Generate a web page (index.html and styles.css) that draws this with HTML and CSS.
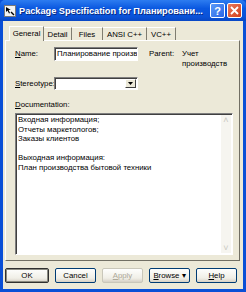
FILE: index.html
```html
<!DOCTYPE html>
<html lang="ru">
<head>
    <meta charset="UTF-8">
    <title>Package Specification</title>
    <link rel="stylesheet" href="styles.css">
</head>
<body>
    <div class="window">
        <div class="titlebar">
            <svg class="app-icon" width="12" height="12" viewBox="0 0 12 12">
                <rect x="0.5" y="0.5" width="11" height="11" fill="#f4f4f4" stroke="#7a7a7a"/>
                <path d="M2 2 L2 7 L3.5 5.5 L5 8.5 L6 8 L4.6 5 L6.8 5 Z" fill="#000"/>
                <path d="M7 7 L10 10" stroke="#000" stroke-width="1.4"/>
            </svg>
            <span class="title">Package Specification for Планировани...</span>
            <span class="tbtn help">?</span>
            <span class="tbtn close">
                <svg width="9" height="9" viewBox="0 0 9 9"><path d="M1 1 L8 8 M8 1 L1 8" stroke="#fff" stroke-width="1.8"/></svg>
            </span>
        </div>
        <div class="client">
            <div class="tabs">
                <div class="tab active tab-general">General</div>
                <div class="tab tab-detail">Detail</div>
                <div class="tab tab-files">Files</div>
                <div class="tab tab-ansi">ANSI C++</div>
                <div class="tab tab-vc">VC++</div>
            </div>
            <div class="panel">
                <div class="row">
                    <span class="label"><u>N</u>ame:</span>
                    <div class="field">Планирование произв</div>
                    <span class="parent-label">Parent:</span>
                    <span class="parent-value">Учет<br>производств</span>
                </div>
                <div class="row row-combo">
                    <span class="label"><u>S</u>tereotype:</span>
                    <div class="field combo">
                        <span class="combo-btn">
                            <svg width="5" height="3" viewBox="0 0 5 3"><path d="M0 0 H5 L2.5 3 Z" fill="#000"/></svg>
                        </span>
                    </div>
                </div>
                <div class="doc-label"><u>D</u>ocumentation:</div>
                <div class="doc">
                    <div class="doc-text">
                        Входная информация;<br>
                        Отчеты маркетологов;<br>
                        Заказы клиентов<br>
                        <br>
                        Выходная информация:<br>
                        План производства бытовой техники
                    </div>
                    <div class="scroll">
                        <span class="arrow">&#x2C4;</span>
                        <span class="arrow">&#x2C5;</span>
                    </div>
                </div>
            </div>
            <div class="buttons">
                <div class="btn default">OK</div>
                <div class="btn">Cancel</div>
                <div class="btn disabled"><u>A</u>pply</div>
                <div class="btn"><u>B</u>rowse &#9662;</div>
                <div class="btn"><u>H</u>elp</div>
            </div>
        </div>
    </div>
</body>
</html>
```
FILE: styles.css
```css
body {
    margin: 0;
    font-family: "Liberation Sans", Arial, sans-serif;
    font-size: 7.8px;
    color: #000;
}

.window {
    width: 246px;
    height: 292px;
    box-sizing: border-box;
    background: #0a4fd6;
    padding: 0 3px 3px 3px;
    display: flex;
    flex-direction: column;
}

.titlebar {
    height: 21px;
    margin: 0 -3px;
    padding: 0 4px;
    display: flex;
    align-items: center;
    background: linear-gradient(#2d7cf0, #0a58e0 40%, #0a52d8 80%, #0847c4);
    border-radius: 5px 5px 0 0;
}

.app-icon {
    flex: none;
    margin-right: 3px;
}

.title {
    flex: 1;
    color: #fff;
    font-weight: bold;
    font-size: 9.2px;
    white-space: nowrap;
    text-shadow: 1px 1px 0 #0a2a80;
}

.tbtn {
    width: 15px;
    height: 15px;
    flex: none;
    box-sizing: border-box;
    border: 1px solid #fff;
    border-radius: 2px;
    display: flex;
    align-items: center;
    justify-content: center;
    margin-left: 2px;
    color: #fff;
    font-weight: bold;
    font-size: 11px;
}

.help {
    background: linear-gradient(135deg, #5b9af8, #2a66e6);
}

.close {
    background: linear-gradient(135deg, #e8795c, #d3401c);
}

.client {
    flex: 1;
    background: #ece9d8;
    padding: 4px 3px 0 2px;
    display: flex;
    flex-direction: column;
}

.tabs {
    display: flex;
    height: 15px;
    padding-left: 4px;
    align-items: flex-end;
}

.tab {
    height: 13px;
    line-height: 13px;
    box-sizing: border-box;
    text-align: center;
    border-right: 1px solid #7f7d70;
    border-top: 1px solid #fff;
    background: #ece9d8;
}

.tab.active {
    height: 15px;
    line-height: 14px;
    border-left: 1px solid #fff;
    position: relative;
    top: 1px;
}

.tab-general { width: 35px; }
.tab-detail { width: 28px; }
.tab-files { width: 31px; }
.tab-ansi { width: 44px; }
.tab-vc { width: 29px; }

.panel {
    height: 221px;
    box-sizing: border-box;
    border: 1px solid #fff;
    border-right-color: #716f64;
    border-bottom-color: #716f64;
    padding: 6px 6px 5px 9px;
    display: flex;
    flex-direction: column;
}

.row {
    display: flex;
    align-items: flex-start;
}

.row > * {
    flex: none;
}

.label {
    width: 39px;
    line-height: 14px;
    white-space: nowrap;
}

.field {
    width: 84px;
    height: 14px;
    box-sizing: border-box;
    background: #fff;
    border: 1px solid;
    border-color: #7f7f7f #fff #fff #7f7f7f;
    box-shadow: inset 1px 1px 0 #404040;
    line-height: 12px;
    padding-left: 2px;
    white-space: nowrap;
    overflow: hidden;
}

.parent-label {
    margin-left: 11px;
    width: 33px;
    line-height: 14px;
}

.parent-value {
    line-height: 10px;
    padding-top: 2px;
}

.row-combo {
    margin-top: 8px;
}

.combo {
    height: 13px;
    display: flex;
    justify-content: flex-end;
    padding: 1px;
}

.combo-btn {
    width: 11px;
    background: #ece9d8;
    border: 1px solid;
    border-color: #fff #404040 #404040 #fff;
    box-sizing: border-box;
    display: flex;
    align-items: center;
    justify-content: center;
}

.doc-label {
    margin-top: 9px;
    line-height: 10px;
}

.doc {
    margin-top: 3px;
    flex: 1;
    background: #fff;
    border: 1px solid;
    border-color: #7f7f7f #fff #fff #7f7f7f;
    box-shadow: inset 1px 1px 0 #404040;
    display: flex;
}

.doc-text {
    flex: 1;
    padding: 1px 0 0 2px;
    line-height: 9.6px;
}

.scroll {
    width: 10px;
    margin: 1px 1px 1px 0;
    background: #f6f5f0;
    display: flex;
    flex-direction: column;
    justify-content: space-between;
    align-items: center;
    color: #c8c8c0;
    font-size: 9px;
}

.arrow {
    line-height: 10px;
}

.buttons {
    display: flex;
    gap: 6px;
    margin-top: 7px;
}

.btn {
    width: 41px;
    height: 15px;
    box-sizing: border-box;
    border: 1px solid #003c74;
    border-radius: 2px;
    background: linear-gradient(#fefefd, #f0efe7 70%, #d6d0c5);
    text-align: center;
    line-height: 13px;
}

.btn.default {
    width: 44px;
    border: 1px solid #303030;
    box-shadow: inset 0 0 0 1px #8a8a80;
}

.btn.disabled {
    color: #aca899;
    border-color: #c9c7ba;
}
```
